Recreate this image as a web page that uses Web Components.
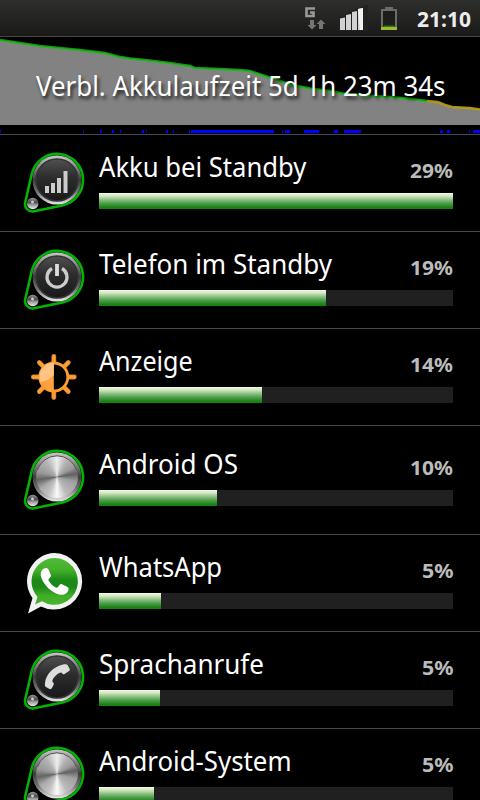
<!DOCTYPE html>
<html lang="de">
<head>
<meta charset="utf-8">
<title>Akku</title>
<style>
  body {
    margin: 0;
    background: #000;
    color: #fff;
    font-family: "Noto Sans", "Open Sans", sans-serif;
  }
</style>
</head>
<body>
<battery-screen></battery-screen>

<script>
// Text squeezed horizontally to the given width
class FitText extends HTMLElement {
  constructor() {
    super();
    this.attachShadow({ mode: "open" });
  }
  connectedCallback() {
    const width = Number(this.getAttribute("width"));
    this.shadowRoot.innerHTML = `
      <style>
        :host { display: block; width: ${width}px; white-space: nowrap; }
        span { display: inline-block; transform-origin: 0 50%; }
      </style>
      <span><slot></slot></span>
    `;
    const span = this.shadowRoot.querySelector("span");
    span.style.transform = `scaleX(${width / span.offsetWidth})`;
  }
}
customElements.define("fit-text", FitText);

class StatusBar extends HTMLElement {
  constructor() {
    super();
    this.attachShadow({ mode: "open" });
  }
  connectedCallback() {
    this.shadowRoot.innerHTML = `
      <style>
        :host {
          display: flex;
          justify-content: flex-end;
          box-sizing: border-box;
          height: 37px;
          padding-right: 9px;
          border-bottom: 1px solid #484848;
          background: linear-gradient(#2e2e2c, #242423 50%, #191918);
        }
        svg { display: block; width: 112px; height: 36px; }
        fit-text {
          margin-left: 1px;
          color: #ececec;
          font-size: 21px;
          font-weight: bold;
          line-height: 38px;
        }
      </style>
      <svg viewBox="304 0 112 36">
        <path d="M315 8.500H306.500V16H313.500V12.500H310" fill="none" stroke="#999" stroke-width="2.600"/>
        <path d="M310 20h4v5h2.500L312 29.500 307.500 25H310zM319 29v-5h-2.500l4.500-4.500 4.500 4.500H323v5z" fill="#757575"/>
        <path d="M338 31V17l27-12h3v26z" fill="#222"/>
        <path d="M340 18.500l5-1V30h-5zM346 15l5-1v16h-5zM352 12l5-1v19h-5zM358 9l5-1v22h-5z" fill="#d2d2d2"/>
        <path d="M358 9l5-1v22h-3z" fill="#f2f2f2"/>
        <path d="M382 28V10h14v18" fill="#1d1d1c" stroke="#6b6b6b" stroke-width="2"/>
        <path d="M385 7h8v3h-8z" fill="#6b6b6b"/>
        <path d="M383.500 25.500h11v1.500h-11z" fill="#26752a"/>
        <path d="M381 27h16v3h-16z" fill="#a5b72a"/>
      </svg>
      <fit-text width="54">21:10</fit-text>
    `;
  }
}
customElements.define("status-bar", StatusBar);

const CHART_GREEN = "0,3 20,6 40,9 60,11 80,13 105,16 118,19.500 130,21.500 145,23 170,26 190,29 195,31 220,32 240,33 250,34 265,39 280,44 290,47.500 310,51.500 330,54 345,57 365,58.500 390,60 412,62 427,64";
const CHART_YELLOW = "427,64 438,65 445,68 452,70 470,71 480,72.500";
const ACTIVE = [
  [0, 1], [83, 84], [100, 102], [112, 114], [120, 121], [142, 144], [146, 147],
  [166, 168], [173, 174], [189, 190], [191, 274], [282, 283], [285, 290],
  [304, 319], [334, 338], [344, 361], [440, 443], [447, 450], [469, 470], [473, 480],
];

class BatteryChart extends HTMLElement {
  constructor() {
    super();
    this.attachShadow({ mode: "open" });
  }
  connectedCallback() {
    const marks = ACTIVE.map(([a, b]) => `<rect x="${a}" y="93" width="${b - a}" height="3"/>`).join("");
    this.shadowRoot.innerHTML = `
      <style>
        :host {
          display: grid;
          height: 97px;
          border-bottom: 1px solid #484848;
        }
        svg, fit-text { grid-area: 1 / 1; }
        svg { display: block; width: 480px; height: 97px; }
        fit-text {
          margin: 29px 0 0 36px;
          font-size: 28px;
          line-height: 38px;
          text-shadow: 2px 3px 4px rgba(0, 0, 0, 0.8);
        }
      </style>
      <svg viewBox="0 0 480 97">
        <polygon points="${CHART_GREEN} ${CHART_YELLOW} 480,88 0,88" fill="#828282"/>
        <g fill="#00f" shape-rendering="crispEdges">${marks}</g>
      </svg>
      <fit-text width="409"><slot></slot></fit-text>
      <svg viewBox="0 0 480 97" fill="none" stroke-width="2.600">
        <polyline points="${CHART_GREEN}" stroke="#10c010" stroke-opacity="0.8"/>
        <polyline points="${CHART_YELLOW}" stroke="#b8a010" stroke-opacity="0.9"/>
      </svg>
    `;
  }
}
customElements.define("battery-chart", BatteryChart);

// Glyphs drawn inside the dark round knob
const GLYPHS = {
  signal: `<path d="M21 33h4v7h-4zM27 30h4v10h-4zM33 25h4v15h-4zM39.500 18h4v22h-4z" fill="#ccc"/>`,
  power: `<path d="M28 18.500a10 10 0 1 0 10 0" fill="none" stroke="#ccc" stroke-width="3.200"/>
    <path d="M33 14v12" stroke="#ddd" stroke-width="3.800"/>`,
  call: `<path d="M39 14.500c-9 2-17 9-18 18.500-.3 2 0 3.500 1 4l3.500 2c1 .4 2 0 2.500-1l1.700-3.500c.4-1-.1-1.800-1.200-2.500-1-3 5-9.500 9-9.500 1 1.700 2 2.300 3 1.500l4.500-3c1-.8 1-1.500.5-2.500l-2-3.500c-.6-1-2.500-1-4.500-.5z" fill="#ddd"/>`,
};

class AppIcon extends HTMLElement {
  constructor() {
    super();
    this.attachShadow({ mode: "open" });
  }
  connectedCallback() {
    const name = this.getAttribute("name");
    let art;
    if (name === "display") art = this.sun();
    else if (name === "whatsapp") art = this.whatsapp();
    else art = this.knob(name);
    this.shadowRoot.innerHTML = `
      <style>
        :host { display: block; width: 60px; height: 60px; }
        svg { display: block; overflow: visible; }
        .metal {
          width: 100%;
          height: 100%;
          border-radius: 50%;
          background: conic-gradient(#eee, #b4b4b4 30deg, #999 60deg, #606060 80deg, #a0a0a0 105deg, #bbb 150deg, #fafafa 180deg, #c4c4c4 205deg, #aaa 235deg, #646464 262deg, #999 285deg, #b4b4b4 325deg, #eee);
        }
      </style>
      <svg width="60" height="60" viewBox="0 0 60 60">${art}</svg>
    `;
  }

  knob(name) {
    const face = name === "metal"
      ? `<foreignObject x="12" y="6" width="42" height="42"><div class="metal"></div></foreignObject>
         <path d="M13.500 20a20.500 20.500 0 0 1 39 0" fill="none" stroke="#555"/>`
      : `<circle cx="33" cy="27" r="21" fill="url(#face)" stroke="#333" stroke-width="1.500"/>${GLYPHS[name]}`;
    return `
      <defs>
        <linearGradient id="ring" x2="0" y2="1">
          <stop offset="0" stop-color="#c8c8c8"/><stop offset=".3" stop-color="#777"/>
          <stop offset=".5" stop-color="#3c3c3c"/><stop offset=".75" stop-color="#777"/>
          <stop offset="1" stop-color="#e8e8e8"/>
        </linearGradient>
        <linearGradient id="face" x2="0" y2="1">
          <stop offset="0" stop-color="#505050"/><stop offset=".45" stop-color="#2c2c2c"/>
          <stop offset="1" stop-color="#181818"/>
        </linearGradient>
        <linearGradient id="ball" x2="0" y2="1">
          <stop offset="0" stop-color="#999"/><stop offset=".4" stop-color="#4a4a4a"/>
          <stop offset=".6" stop-color="#999"/><stop offset="1" stop-color="#eee"/>
        </linearGradient>
      </defs>
      <path d="M7.700 21.200A26 26 0 1 1 38.300 52.400L10 58.300A7.500 7.500 0 0 1 1.200 49.300Z" fill="#000" stroke="#00b400" stroke-width="2.600"/>
      <circle cx="33" cy="27" r="24.500" fill="url(#ring)"/>
      ${face}
      <circle cx="8.700" cy="50.500" r="5.800" fill="url(#ball)"/>
      <circle cx="8.500" cy="49" r="1.500" fill="#ccc"/>`;
  }

  sun() {
    const rays = [0, 45, 90, 135, 180, 225, 270, 315]
      .map((a) => `<path d="M0-15V-20.500" transform="rotate(${a})"/>`)
      .join("");
    return `
      <g transform="translate(29.800 30)">
        <g stroke="#c08038" stroke-width="4.800" stroke-linecap="round">${rays}</g>
        <g stroke="#ff9c33" stroke-width="3.400" stroke-linecap="round">${rays}</g>
        <circle r="14" fill="#000" stroke="#ff9c33" stroke-width="2.800"/>
        <path d="M0-14A14 14 0 0 0 0 14Z" fill="#ffa23e"/>
        <path d="M0-14.500A14.500 14.500 0 0 0-13.500 5Q-6 4 0-2Z" fill="#ffc484"/>
      </g>`;
  }

  whatsapp() {
    return `
      <defs>
        <linearGradient id="wa" x2="0" y2="1">
          <stop offset="0" stop-color="#4fba35"/><stop offset=".25" stop-color="#45b02b"/>
          <stop offset=".48" stop-color="#1c8818"/><stop offset=".62" stop-color="#1c8818"/>
          <stop offset=".8" stop-color="#41ac28"/><stop offset="1" stop-color="#4ab430"/>
        </linearGradient>
      </defs>
      <path d="M30.500 0A28.300 28.300 0 1 1 17 53.500L4 60.500 8.500 45A28.300 28.300 0 0 1 30.500 0Z" fill="#f2f2f2"/>
      <path d="M30.500 5A23.400 23.400 0 1 1 18 48.200L11 51.500 13.500 44A23.400 23.400 0 0 1 30.500 5Z" fill="url(#wa)"/>
      <path d="M20 15.500c-3.300 1.800-4 5.500-2.500 9.500 2.500 7 10 14.500 17.500 16.500 4.500 1 8.500-.7 9.500-4.500.4-1.500 0-2.500-1-3l-5.500-2.700c-1-.5-1.800-.2-2.500.7l-1.600 2c-.6.8-1.500.8-2.500.3-3-1.500-5.300-4-6.600-6.500-.5-1-.4-1.500.3-2.200l1.500-1.800c.5-.7.500-1.300.2-2.100l-2.300-5.200c-.7-1.700-2.700-2-4.500-1z" fill="#fff"/>`;
  }
}
customElements.define("app-icon", AppIcon);

class UsageRow extends HTMLElement {
  constructor() {
    super();
    this.attachShadow({ mode: "open" });
  }
  connectedCallback() {
    const percent = this.getAttribute("percent");
    // one digit takes less room than two
    const percentWidth = percent.length === 1 ? 31 : 43;
    this.shadowRoot.innerHTML = `
      <style>
        :host {
          display: flex;
          align-items: center;
          gap: 15px;
          box-sizing: border-box;
          height: 97px;
          padding: 0 27px 0 24px;
          border-bottom: 1px solid #484848;
        }
        .info { flex: 1; height: 60px; }
        .line { display: flex; justify-content: space-between; height: 40px; }
        .name { font-size: 27px; line-height: 27px; }
        .percent {
          color: #bbb;
          font-size: 20px;
          font-weight: bold;
          line-height: 36px;
        }
        .track { height: 16px; background: #202020; }
        .fill {
          height: 100%;
          width: ${this.getAttribute("fill")}px;
          background: linear-gradient(#f2fae2, #cfe6bf 20%, #8bc083 42%, #4f9d4a 65%, #1c8417 88%, #168012);
        }
      </style>
      <slot name="icon"></slot>
      <div class="info">
        <div class="line">
          <fit-text class="name" width="${this.getAttribute("text-width")}"><slot></slot></fit-text>
          <fit-text class="percent" width="${percentWidth}">${percent}%</fit-text>
        </div>
        <div class="track"><div class="fill"></div></div>
      </div>
    `;
  }
}
customElements.define("usage-row", UsageRow);

class BatteryScreen extends HTMLElement {
  constructor() {
    super();
    this.attachShadow({ mode: "open" });
  }
  connectedCallback() {
    this.shadowRoot.innerHTML = `
      <style>
        :host { display: block; width: 480px; height: 800px; overflow: hidden; }
        .tall { height: 109px; }
      </style>
      <status-bar></status-bar>
      <battery-chart>Verbl. Akkulaufzeit 5d 1h 23m 34s</battery-chart>
      <usage-row percent="29" fill="354" text-width="207"><app-icon slot="icon" name="signal"></app-icon>Akku bei Standby</usage-row>
      <usage-row percent="19" fill="227" text-width="233"><app-icon slot="icon" name="power"></app-icon>Telefon im Standby</usage-row>
      <usage-row percent="14" fill="163" text-width="94"><app-icon slot="icon" name="display"></app-icon>Anzeige</usage-row>
      <usage-row class="tall" percent="10" fill="118" text-width="139"><app-icon slot="icon" name="metal"></app-icon>Android OS</usage-row>
      <usage-row percent="5" fill="62" text-width="123"><app-icon slot="icon" name="whatsapp"></app-icon>WhatsApp</usage-row>
      <usage-row percent="5" fill="61" text-width="165"><app-icon slot="icon" name="call"></app-icon>Sprachanrufe</usage-row>
      <usage-row percent="5" fill="55" text-width="193"><app-icon slot="icon" name="metal"></app-icon>Android-System</usage-row>
    `;
  }
}
customElements.define("battery-screen", BatteryScreen);
</script>
</body>
</html>
